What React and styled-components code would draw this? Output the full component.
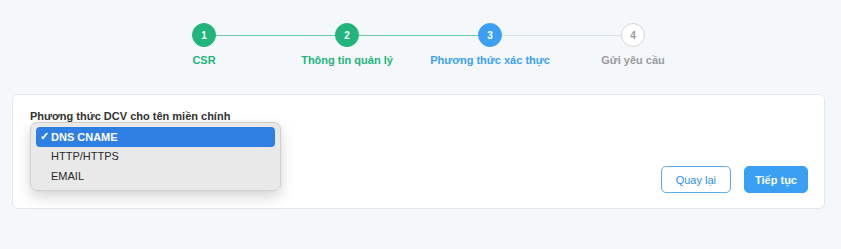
import React from "react";
import styled, { createGlobalStyle } from "styled-components";

const GREEN = "#21b47b";
const BLUE = "#3ba0f4";

const Global = createGlobalStyle`
  html, body { margin: 0; padding: 0; background: #f4f8fb; }
  body { font-family: "Liberation Sans", Arial, sans-serif; }
  * { box-sizing: border-box; }
`;

const Page = styled.div`
  width: 841px;
  height: 249px;
  padding: 23px 16px 0 12px;
  display: flex;
  flex-direction: column;
`;

const Stepper = styled.div`
  display: flex;
  justify-content: center;
`;

const Step = styled.div`
  width: 143px;
  display: flex;
  flex-direction: column;
  align-items: center;
`;

const Track = styled.div`
  width: 100%;
  height: 24px;
  display: flex;
  align-items: flex-start;
`;

const Line = styled.div`
  flex: 1;
  height: 1px;
  margin-top: 12px;
  background: ${(p) => (p.$hidden ? "transparent" : p.$done ? "#6ccaa5" : "#d9e1e6")};
`;

const Circle = styled.div`
  width: 24px;
  height: 24px;
  border-radius: 50%;
  display: flex;
  align-items: center;
  justify-content: center;
  font-size: 10px;
  font-weight: 700;
  background: ${(p) => (p.$state === "done" ? GREEN : p.$state === "active" ? BLUE : "#fff")};
  color: ${(p) => (p.$state === "todo" ? "#9a9a9a" : "#fff")};
  border: 1px solid ${(p) => (p.$state === "done" ? GREEN : p.$state === "active" ? BLUE : "#d6d6d6")};
`;

const StepLabel = styled.div`
  margin-top: 7px;
  font-size: 11px;
  font-weight: 700;
  white-space: nowrap;
  color: ${(p) => (p.$state === "done" ? GREEN : p.$state === "active" ? BLUE : "#9b9b9b")};
`;

const Card = styled.div`
  margin-top: 28px;
  background: #fff;
  border: 1px solid #e3e8ec;
  border-radius: 6px;
  padding: 14px 16px 15px 16px;
  display: flex;
  flex-direction: column;
`;

const FieldLabel = styled.div`
  font-size: 11px;
  font-weight: 700;
  color: #333;
  line-height: 14px;
  padding-left: 1px;
`;

const SelectWrap = styled.div`
  position: relative;
  width: 251px;
  margin-top: 3px;
  margin-left: 1px;
`;

const SelectBox = styled.div`
  height: 22px;
  border: 1px solid #c9d3db;
  border-radius: 4px;
  background: #fff;
`;

const Menu = styled.div`
  position: absolute;
  left: 0;
  top: -4px;
  width: 251px;
  padding: 4px 5px;
  background: rgba(232, 232, 232, 0.97);
  border: 1px solid #d0d0d0;
  border-radius: 7px;
  box-shadow: 0 6px 14px rgba(0, 0, 0, 0.16), 0 0 2px rgba(0, 0, 0, 0.08);
  display: flex;
  flex-direction: column;
`;

const MenuItem = styled.div`
  height: 19.5px;
  display: flex;
  align-items: center;
  border-radius: 4px;
  font-size: 11px;
  padding-left: 1px;
  background: ${(p) => (p.$selected ? "#2f7fe3" : "transparent")};
  color: ${(p) => (p.$selected ? "#fff" : "#2a2a2a")};
  font-weight: ${(p) => (p.$selected ? 700 : 400)};
`;

const Check = styled.span`
  width: 14px;
  font-size: 11px;
  display: inline-flex;
  justify-content: center;
`;

const Footer = styled.div`
  margin-top: 18px;
  display: flex;
  justify-content: flex-end;
  gap: 13px;
`;

const Button = styled.button`
  height: 27px;
  padding: 0 ${(p) => (p.$primary ? "10px" : "14px")};
  border-radius: 5px;
  font-family: "Liberation Sans", Arial, sans-serif;
  font-size: 11px;
  font-weight: ${(p) => (p.$primary ? 700 : 400)};
  border: 1px solid ${(p) => (p.$primary ? BLUE : "#5aaeef")};
  background: ${(p) => (p.$primary ? BLUE : "#fff")};
  color: ${(p) => (p.$primary ? "#fff" : "#2d8fe0")};
  cursor: pointer;
`;

const steps = [
  { n: 1, label: "CSR" },
  { n: 2, label: "Thông tin quản lý" },
  { n: 3, label: "Phương thức xác thực" },
  { n: 4, label: "Gửi yêu cầu" },
];
const current = 3;

const options = ["DNS CNAME", "HTTP/HTTPS", "EMAIL"];

export default function App() {
  return (
    <>
      <Global />
      <Page>
        <Stepper>
          {steps.map((s, i) => {
            const state = s.n < current ? "done" : s.n === current ? "active" : "todo";
            return (
              <Step key={s.n}>
                <Track>
                  <Line $hidden={i === 0} $done={s.n <= current} />
                  <Circle $state={state}>{s.n}</Circle>
                  <Line $hidden={i === steps.length - 1} $done={s.n + 1 <= current} />
                </Track>
                <StepLabel $state={state}>{s.label}</StepLabel>
              </Step>
            );
          })}
        </Stepper>
        <Card>
          <FieldLabel>Phương thức DCV cho tên miền chính</FieldLabel>
          <SelectWrap>
            <SelectBox />
            <Menu>
              {options.map((o, i) => (
                <MenuItem key={o} $selected={i === 0}>
                  <Check>{i === 0 ? "✓" : ""}</Check>
                  {o}
                </MenuItem>
              ))}
            </Menu>
          </SelectWrap>
          <Footer>
            <Button>Quay lại</Button>
            <Button $primary>Tiếp tục</Button>
          </Footer>
        </Card>
      </Page>
    </>
  );
}
